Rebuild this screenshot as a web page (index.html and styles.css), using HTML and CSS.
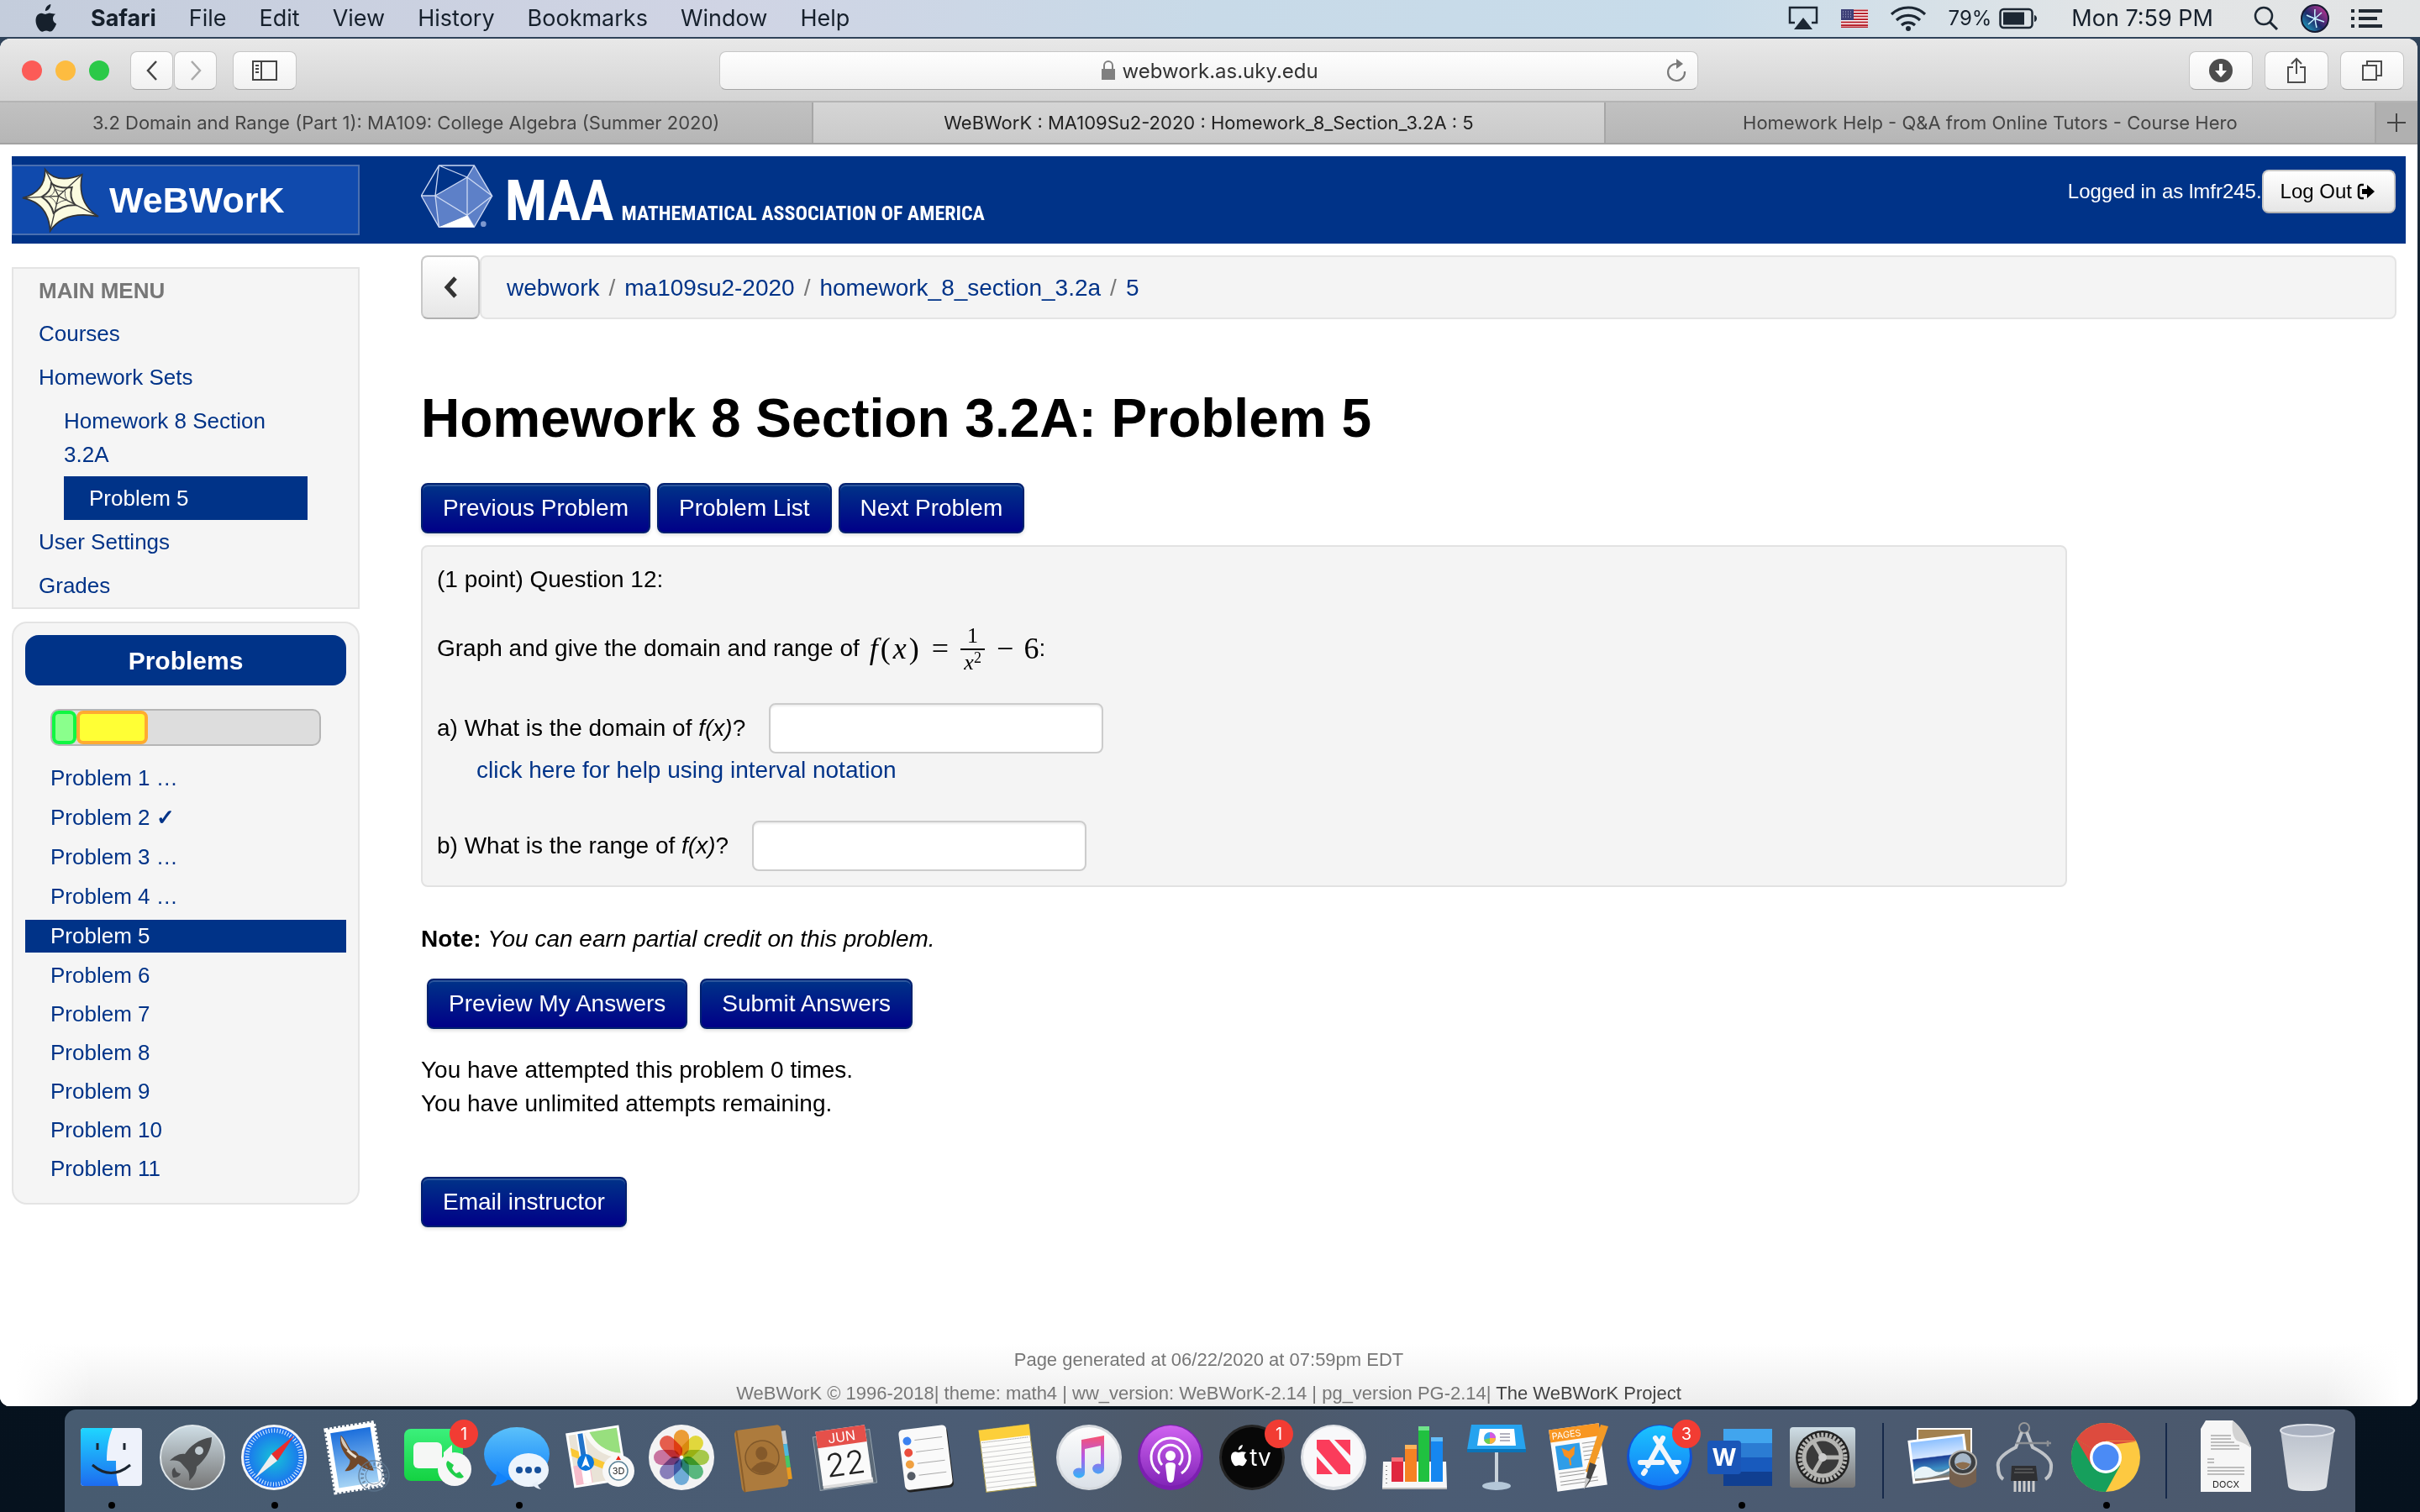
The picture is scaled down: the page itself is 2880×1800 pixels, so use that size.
FILE: index.html
```html
<!DOCTYPE html>
<html lang="en">
<head>
<meta charset="utf-8">
<title>WeBWorK : MA109Su2-2020 : Homework_8_Section_3.2A : 5</title>
<link rel="stylesheet" href="styles.css">
</head>
<body>
<header class="menubar">
  <nav class="menus">
    <svg class="apple" viewBox="0 0 26 32"><path d="M18 0c.2 2-.6 3.800-1.700 5.200C15.200 6.600 13.500 7.600 12 7.500c-.2-1.900.7-3.800 1.700-5C14.800 1.200 16.600.2 18 0zM23.500 11c-1.800 1.100-3 2.900-3 5.200 0 2.600 1.600 4.800 3.900 5.700-.6 1.900-1.500 3.700-2.700 5.500-1.100 1.600-2.300 3.300-4.200 3.300-1.800 0-2.400-1.100-4.500-1.100-2.200 0-2.800 1.100-4.500 1.200-1.800.1-3.200-1.800-4.300-3.400C1.700 23.800.1 17.500 2.300 13.400 3.400 11.300 5.500 10 7.700 10c1.800 0 3.400 1.200 4.500 1.200 1.100 0 3.100-1.400 5.300-1.200 1.700.1 3.900.6 6 1z"/></svg>
    <b>Safari</b><span>File</span><span>Edit</span><span>View</span><span>History</span><span>Bookmarks</span><span>Window</span><span>Help</span>
  </nav>
  <div class="status">
    <svg width="38" height="30" viewBox="0 0 38 30"><path d="M9 20H3V2h32v18h-6" fill="none" stroke="#1c2733" stroke-width="2.500"/><path d="M19 14l11 14H8z" fill="#1c2733"/></svg>
    <svg width="32" height="22" viewBox="0 0 32 22"><path fill="#fff" d="M0 0h32v22H0z"/><path d="M0 1.500h32M0 5h32M0 8.500h32M0 12h32M0 15.500h32M0 19h32M0 21.500h32" stroke="#b8242f" stroke-width="1.800"/><path fill="#3e4078" d="M0 0h15v13H0z"/><path d="M2 3h12M2 6h12M2 9h12" stroke="#b9bbd6" stroke-dasharray="1 2"/></svg>
    <svg width="44" height="30" viewBox="0 0 44 30"><g fill="none" stroke="#1c2733" stroke-width="3.200"><path d="M2 10a29 29 0 0 1 40 0"/><path d="M8 17a20 20 0 0 1 28 0"/><path d="M14 23a12 12 0 0 1 16 0"/></g><circle cx="22" cy="27" r="3" fill="#1c2733"/></svg>
    <span class="battery">79%<svg width="48" height="26" viewBox="0 0 48 26"><rect x="1.500" y="2" width="38" height="22" rx="4" fill="none" stroke="#1c2733" stroke-width="2.500"/><rect x="5" y="5.500" width="25" height="15" fill="#1c2733"/><path d="M42 9c4 1 4 7 0 8z" fill="#1c2733"/></svg></span>
    <span class="clock">Mon 7:59 PM</span>
    <svg width="30" height="30" viewBox="0 0 30 30"><circle cx="12" cy="12" r="10" fill="none" stroke="#1c2733" stroke-width="2.500"/><path d="M19 19l9 9" stroke="#1c2733" stroke-width="3"/></svg>
    <svg width="34" height="34" viewBox="0 0 34 34"><defs><linearGradient id="siri" x1="0" y1="1" x2="1" y2="0"><stop offset="0" stop-color="#22c8dd"/><stop offset=".45" stop-color="#1d2a6a"/><stop offset="1" stop-color="#e0379d"/></linearGradient></defs><circle cx="17" cy="17" r="16" fill="url(#siri)" stroke="#151a30" stroke-width="2"/><path d="M7 13q6 3 21 8M17 6q-1 10 2 22M25 10Q17 17 9 24" stroke="#c8f3ff" stroke-width="1.500" fill="none"/></svg>
    <svg width="38" height="24" viewBox="0 0 38 24"><path d="M9 3h28M9 12h22M9 21h28M0 3h4M0 12h4M0 21h4" stroke="#222a33" stroke-width="4"/></svg>
  </div>
</header>

<div class="window">
  <div class="toolbar">
    <div class="tools">
      <span class="light red"></span><span class="light yellow"></span><span class="light green"></span>
      <button class="tool narrow first" aria-label="Back"><svg width="16" height="28" viewBox="0 0 16 28"><path d="M13 3L3 14l10 11" fill="none" stroke="#444" stroke-width="2.500"/></svg></button>
      <button class="tool narrow" aria-label="Forward"><svg width="16" height="28" viewBox="0 0 16 28"><path d="M3 3l10 11L3 25" fill="none" stroke="#aaa" stroke-width="2.500"/></svg></button>
      <button class="tool side" aria-label="Sidebar"><svg width="32" height="26" viewBox="0 0 32 26"><path d="M2 2h28v22H2zM12 2v22M5 7h4M5 11h4M5 15h4" fill="none" stroke="#444" stroke-width="2"/></svg></button>
    </div>
    <div class="address">
      <svg width="18" height="24" viewBox="0 0 18 24"><path d="M1 10h16v13H1z" fill="#808080"/><path d="M4 11V6a5 5 0 0 1 10 0v5" fill="none" stroke="#808080" stroke-width="2"/></svg>
      <input type="text" aria-label="Address" value="webwork.as.uky.edu">
      <button class="reload" aria-label="Reload"><svg width="26" height="28" viewBox="0 0 26 28"><path d="M13 6a10 10 0 1 0 10 9" fill="none" stroke="#7a7a7a" stroke-width="2.200"/><path d="M13 0l8 6-8 6z" fill="#7a7a7a"/></svg></button>
    </div>
    <div class="tools end">
      <button class="tool" aria-label="Downloads"><svg width="28" height="28" viewBox="0 0 28 28"><circle cx="14" cy="14" r="14" fill="#4d4d4d"/><path d="M12 6h4v8h5l-7 8-7-8h5z" fill="#fff"/></svg></button>
      <button class="tool" aria-label="Share"><svg width="24" height="32" viewBox="0 0 24 32"><path d="M8 12H2v18h20V12h-6M12 20V3M6 8l6-6 6 6" fill="none" stroke="#4d4d4d" stroke-width="2"/></svg></button>
      <button class="tool" aria-label="Show tabs"><svg width="26" height="26" viewBox="0 0 26 26"><path d="M2 7h16v17H2zM7 7V2h17v17h-6" fill="none" stroke="#4d4d4d" stroke-width="2"/></svg></button>
    </div>
  </div>
  <div class="tabs">
    <div class="tab">3.2 Domain and Range (Part 1): MA109: College Algebra (Summer 2020)</div>
    <div class="tab active">WeBWorK : MA109Su2-2020 : Homework_8_Section_3.2A : 5</div>
    <div class="tab">Homework Help - Q&amp;A from Online Tutors - Course Hero</div>
    <button class="newtab" aria-label="New tab"><svg width="22" height="22" viewBox="0 0 22 22"><path d="M11 0v22M0 11h22" stroke="#444" stroke-width="2"/></svg></button>
  </div>

  <div class="page">
    <header class="masthead">
      <a class="webwork" href="#">
        <svg width="94" height="78" viewBox="52 62 282 234"><path d="M58 172Q140 150 138 70Q180 125 270 88Q250 190 328 238Q205 215 156 290Q150 190 58 172z" fill="#fbfbe0" stroke="#333" stroke-width="5"/><path d="M58 172L186 165L138 70M186 165L270 88M186 165L328 238M186 165L156 290" fill="none" stroke="#3b3b3b" stroke-width="4"/><path d="M126 168Q160 150 160 120Q190 140 234 134Q222 170 246 198Q200 196 168 226Q160 190 126 168z" fill="none" stroke="#3b3b3b" stroke-width="6"/><path d="M152 167Q172 158 172 140Q190 150 210 148Q206 168 218 180Q195 180 178 196Q174 178 152 167z" fill="none" stroke="#555" stroke-width="3"/></svg>
        <span>WeBWorK</span>
      </a>
      <a class="maa" href="#">
        <svg width="86" height="76" viewBox="33 29 258 228"><path d="M97 32h126l64 109-64 111H97L34 140z" fill="#003388"/><path d="M223 32l64 109-64 111-25-42L97 252 34 140h50L198 74z" fill="#5d80c8"/><path d="M84 140l14 110-64-110z" fill="#4a6fbd"/><path d="M97 32h126l64 109-64 111H97L34 140zM97 32L84 140H34M97 32l101 42 25-42M198 74L84 140l114 70V74l89 67-89 69 25 42M84 140l13 112" fill="none" stroke="#ccd8f2" stroke-width="4"/><path d="M97 252l101-42 25 42z" fill="#fff"/><circle cx="256" cy="241" r="10" fill="#7d98cf"/></svg>
        <span class="maa-big">MAA</span><span class="maa-small">MATHEMATICAL ASSOCIATION OF AMERICA</span>
      </a>
      <div class="login">Logged in as lmfr245.<button class="logout">Log Out <svg width="22" height="20" viewBox="0 0 22 20"><path d="M8 2H5a3 3 0 0 0-3 3v10a3 3 0 0 0 3 3h3" fill="none" stroke="#000" stroke-width="2.500"/><path d="M6 7h6V2l9 8-9 8v-5H6z"/></svg></button></div>
    </header>
    <div class="columns">
      <aside>
        <nav class="mainmenu">
          <h2>MAIN MENU</h2>
          <a href="#">Courses</a>
          <a href="#">Homework Sets</a>
          <div class="sub">
            <a href="#">Homework 8 Section 3.2A</a>
            <a href="#" class="current">Problem 5</a>
          </div>
          <a href="#">User Settings</a>
          <a href="#">Grades</a>
        </nav>
        <nav class="problems">
          <h2>Problems</h2>
          <div class="progress"><i class="done"></i><i class="partial"></i></div>
          <a href="#">Problem 1 …</a>
          <a href="#">Problem 2 <b>✓</b></a>
          <a href="#">Problem 3 …</a>
          <a href="#">Problem 4 …</a>
          <a href="#" class="current">Problem 5</a>
          <a href="#">Problem 6</a>
          <a href="#">Problem 7</a>
          <a href="#">Problem 8</a>
          <a href="#">Problem 9</a>
          <a href="#">Problem 10</a>
          <a href="#">Problem 11</a>
        </nav>
      </aside>
      <main>
        <div class="crumbs">
          <button class="up" aria-label="Up"><svg width="18" height="26" viewBox="0 0 18 26"><path d="M15 2L5 13l10 11" fill="none" stroke="#333" stroke-width="5"/></svg></button>
          <nav class="trail"><a href="#">webwork</a><i>/</i><a href="#">ma109su2-2020</a><i>/</i><a href="#">homework_8_section_3.2a</a><i>/</i><a href="#">5</a></nav>
        </div>
        <h1>Homework 8 Section 3.2A: Problem 5</h1>
        <div class="buttons">
          <button class="btn">Previous Problem</button>
          <button class="btn">Problem List</button>
          <button class="btn">Next Problem</button>
        </div>
        <form class="problem" id="answers">
          <p>(1 point) Question 12:</p>
          <div class="formula">Graph and give the domain and range of
            <span class="math"><em>f</em><span class="paren">(</span><em>x</em><span class="paren">)</span></span>
            <span class="math op">=</span>
            <span class="math frac"><span>1</span><span class="den"><em>x</em><sup>2</sup></span></span>
            <span class="math op">−</span><span class="math">6</span>:</div>
          <div class="question"><label for="domain">a) What is the domain of <em>f(x)</em>?</label><input type="text" id="domain"></div>
          <a class="help" href="#">click here for help using interval notation</a>
          <div class="question second"><label for="range">b) What is the range of <em>f(x)</em>?</label><input type="text" id="range"></div>
        </form>
        <p class="note"><b>Note:</b> <em>You can earn partial credit on this problem.</em></p>
        <div class="buttons submit">
          <button class="btn" form="answers">Preview My Answers</button>
          <button class="btn" form="answers">Submit Answers</button>
        </div>
        <p class="attempts">You have attempted this problem 0 times.<br>You have unlimited attempts remaining.</p>
        <button class="btn">Email instructor</button>
      </main>
    </div>
    <footer>
      <p>Page generated at 06/22/2020 at 07:59pm EDT</p>
      <p>WeBWorK © 1996-2018| theme: math4 | ww_version: WeBWorK-2.14 | pg_version PG-2.14| <a href="#">The WeBWorK Project</a></p>
    </footer>
  </div>
</div>

<nav class="dock">
  <svg width="0" height="0" class="defs"><defs>
    <linearGradient id="gBlue" x2="0" y2="1"><stop offset="0" stop-color="#1ac4ff"/><stop offset="1" stop-color="#1478f5"/></linearGradient>
    <linearGradient id="gFind" x2="0" y2="1"><stop offset="0" stop-color="#1fd6ff"/><stop offset="1" stop-color="#1d6cf0"/></linearGradient>
    <linearGradient id="gWhite" x2="0" y2="1"><stop offset="0" stop-color="#fdfdfd"/><stop offset="1" stop-color="#dbe1e8"/></linearGradient>
    <linearGradient id="gGrey" x2="0" y2="1"><stop offset="0" stop-color="#cfdee6"/><stop offset="1" stop-color="#757575"/></linearGradient>
    <linearGradient id="gGreen" x2="0" y2="1"><stop offset="0" stop-color="#3bf07b"/><stop offset="1" stop-color="#14d242"/></linearGradient>
    <linearGradient id="gMsg" x2="0" y2="1"><stop offset="0" stop-color="#5bc1fa"/><stop offset="1" stop-color="#1283fb"/></linearGradient>
    <linearGradient id="gPurple" x2="0" y2="1"><stop offset="0" stop-color="#cf62f0"/><stop offset="1" stop-color="#8225b8"/></linearGradient>
    <linearGradient id="gNote" x2="0" y2="1"><stop offset="0" stop-color="#f9526e"/><stop offset=".5" stop-color="#b45ae8"/><stop offset="1" stop-color="#2fb4f8"/></linearGradient>
    <linearGradient id="gSky" x2="0" y2="1"><stop offset="0" stop-color="#1c6fdc"/><stop offset="1" stop-color="#a6d4f5"/></linearGradient>
    <linearGradient id="gSea" x2="0" y2="1"><stop offset="0" stop-color="#8ec1ff"/><stop offset=".42" stop-color="#d4e6ff"/><stop offset=".45" stop-color="#1d3f96"/><stop offset=".75" stop-color="#3c8fc4"/><stop offset="1" stop-color="#8d7a68"/></linearGradient>
    <linearGradient id="gTrash" x2="0" y2="1"><stop offset="0" stop-color="#c4cad4"/><stop offset="1" stop-color="#eef0f2"/></linearGradient>
    <radialGradient id="gSaf"><stop offset="0" stop-color="#16c3d8"/><stop offset="1" stop-color="#1c6cf0"/></radialGradient>
  </defs></svg>
  <a class="app running" href="#" aria-label="Finder"><svg viewBox="0 0 96 96"><rect x="12" y="13" width="73" height="69" rx="4" fill="#eef2fb"/><path d="M16 13h34c-5 12-7 25-7 39h11c0 10 0 20 3 30H16a4 4 0 0 1-4-4V17a4 4 0 0 1 4-4z" fill="url(#gFind)"/><path d="M32 31v8M64 31v8" stroke="#1b2530" stroke-width="3"/><path d="M26 57q22 19 45 0" fill="none" stroke="#1b2530" stroke-width="3"/></svg></a>
  <a class="app" href="#" aria-label="Launchpad"><svg viewBox="0 0 96 96"><circle cx="48" cy="48" r="38" fill="url(#gGrey)" stroke="#dfe6ea" stroke-width="2"/><path d="M71 24C55 26 45 35 39 44c-6-1-12 2-18 8 6-1 11 0 13 2l8 9c2 2 3 8 2 13 7-6 9-12 9-17C62 52 71 40 71 24zM27 60c-4 2-4 7-2 12 4 0 8-1 9-5-4 0-6-2-7-7z" fill="#4a4c4e"/><circle cx="56" cy="40" r="5" fill="#c2ccd2"/></svg></a>
  <a class="app running" href="#" aria-label="Safari"><svg viewBox="0 0 96 96"><circle cx="48" cy="48" r="39" fill="#f4f4f4"/><circle cx="48" cy="48" r="36" fill="url(#gSaf)"/><circle cx="48" cy="48" r="32" fill="none" stroke="#e4f4ff" stroke-width="5" stroke-dasharray="1 2.350"/><path d="M72 22L45 44l7 8z" fill="#e92d2d"/><path d="M25 73l20-29 7 8z" fill="#eee"/></svg></a>
  <a class="app" href="#" aria-label="Mail"><svg viewBox="0 0 96 96"><g transform="rotate(-9 48 48)"><rect x="18" y="10" width="58" height="76" fill="#fff" stroke="#fff" stroke-width="4" stroke-dasharray="3 2"/><rect x="23" y="15" width="48" height="66" fill="url(#gSky)"/><path d="M35 19c3 3 6 12 9 20 4 0 7 3 8 7 8 3 14 10 15 21-6-1-13-5-17-11-4 4-10 8-17 6 4-4 8-7 8-12-6-9-11-19-6-31z" fill="#71482a"/><path d="M35 20c4 7 5 13 8 20-6-4-10-12-8-20z" fill="#d5c9b8"/><path d="M40 38q4 6 9 10" stroke="#e8e0d4" stroke-width="3" fill="none"/></g><g fill="none" stroke="#5f7890" opacity=".8"><circle cx="70" cy="70" r="18" stroke-width="1.500"/><circle cx="70" cy="70" r="10"/><circle cx="70" cy="70" r="14" stroke-width="4" stroke-dasharray="2 3"/></g></svg></a>
  <a class="app" href="#" aria-label="FaceTime"><svg viewBox="0 0 96 96"><rect x="9" y="14" width="70" height="62" rx="8" fill="url(#gGreen)"/><rect x="20" y="30" width="34" height="31" rx="6" fill="#f5f7f5"/><path d="M56 42l10-9v26l-10-6z" fill="#f5f7f5"/><circle cx="69" cy="62" r="20" fill="#f7f7f7"/><path d="M61 52c-4 3-1 10 4 15s11 8 15 4l-5-6-4 2c-2-1-4-4-5-6l2-4z" fill="#20cf4a"/></svg><span class="badge">1</span></a>
  <a class="app running" href="#" aria-label="Messages"><svg viewBox="0 0 96 96"><ellipse cx="46" cy="44" rx="39" ry="32" fill="url(#gMsg)"/><path d="M22 64q1 11-7 18 15-1 21-8z" fill="#1283fb"/><ellipse cx="60" cy="63" rx="24" ry="20" fill="#edf4fc"/><path d="M64 80q4 5 11 6-5-4-4-10z" fill="#e6eef8"/><g fill="#17509b"><circle cx="49" cy="63" r="4"/><circle cx="60" cy="63" r="4"/><circle cx="71" cy="63" r="4"/></g></svg></a>
  <a class="app" href="#" aria-label="Maps"><svg viewBox="0 0 96 96"><g transform="rotate(-9 44 48)"><rect x="12" y="14" width="64" height="66" fill="#fff"/><path d="M15 17h58v60H15z" fill="#e9e3d7"/><path d="M40 17h33v30q-24-4-33-30z" fill="#98df7e"/><path d="M15 54h20v23H15z" fill="#f7bccb"/><path d="M15 32l58 36v9L15 42z" fill="#fbc835"/><path d="M37 17q8 26 36 34" fill="none" stroke="#f9f9f5" stroke-width="6"/><path d="M29 17v60" stroke="#fff" stroke-width="10"/><path d="M29 17v32" stroke="#2273c9" stroke-width="6"/></g><circle cx="31" cy="54" r="10" fill="#0b77dd"/><path d="M31 46l5 14-5-3-5 3z" fill="#fff"/><circle cx="70" cy="64" r="19" fill="#f8f8f8"/><circle cx="70" cy="64" r="11" fill="#fff" stroke="#5d8499" stroke-width="1.500"/><path d="M70 46l3 5h-6z" fill="#e21"/><text x="70" y="68" class="t11">3D</text></svg></a>
  <a class="app" href="#" aria-label="Photos"><svg viewBox="0 0 96 96"><circle cx="48" cy="48" r="39" fill="#f3f3f3"/><g class="petals"><rect x="39" y="15" width="18" height="31" rx="9" fill="#f79a22"/><rect x="39" y="15" width="18" height="31" rx="9" fill="#eadf2a" transform="rotate(45 48 48)"/><rect x="39" y="15" width="18" height="31" rx="9" fill="#a5cd3c" transform="rotate(90 48 48)"/><rect x="39" y="15" width="18" height="31" rx="9" fill="#4bb976" transform="rotate(135 48 48)"/><rect x="39" y="15" width="18" height="31" rx="9" fill="#65acdf" transform="rotate(180 48 48)"/><rect x="39" y="15" width="18" height="31" rx="9" fill="#8378bd" transform="rotate(225 48 48)"/><rect x="39" y="15" width="18" height="31" rx="9" fill="#cd6b9f" transform="rotate(270 48 48)"/><rect x="39" y="15" width="18" height="31" rx="9" fill="#f0523e" transform="rotate(315 48 48)"/></g></svg></a>
  <a class="app" href="#" aria-label="Contacts"><svg viewBox="0 0 96 96"><g transform="rotate(-8 48 48)"><path d="M70 20h9v16h-9z" fill="#c9ccd0"/><path d="M70 36h9v14h-9z" fill="#4fb7de"/><path d="M70 50h9v14h-9z" fill="#46c766"/><path d="M70 64h9v14h-9z" fill="#e89b20"/><rect x="18" y="12" width="56" height="74" rx="5" fill="#ad7b3d"/><path d="M21 12v74" stroke="#8b5e2a" stroke-width="2"/><circle cx="47" cy="48" r="20" fill="#a67437" stroke="#80582a" stroke-width="1.500"/><ellipse cx="47" cy="43" rx="7" ry="8" fill="#84592a"/><path d="M32 60q15-14 30 0-15 15-30 0z" fill="#84592a"/></g></svg></a>
  <a class="app" href="#" aria-label="Calendar"><svg viewBox="0 0 96 96"><g transform="rotate(-8 48 48)"><path d="M14 19h68v64H14z" fill="#5c6a78" stroke="#97a5b0"/><path d="M18 76h60v6H18z" fill="#ddd"/><path d="M18 13h59v65H18z" fill="#fafafa"/><path d="M18 13h59v20H18z" fill="#e5504a"/><text x="48" y="29" class="t16 white">JUN</text><text x="48" y="69" class="t38">22</text></g></svg></a>
  <a class="app" href="#" aria-label="Reminders"><svg viewBox="0 0 96 96"><g transform="rotate(-7 48 48)"><rect x="20" y="15" width="57" height="72" rx="5" fill="#222"/><rect x="19" y="12" width="57" height="72" rx="5" fill="#fafafa"/><circle cx="28" cy="26" r="5" fill="#3c82f0"/><circle cx="28" cy="40" r="5" fill="#eb4d3d"/><circle cx="28" cy="54" r="5" fill="#f0a040"/><circle cx="28" cy="68" r="5" fill="#555c66"/><path d="M37 26h33M37 40h33M37 54h33M37 68h33" stroke="#aaa"/></g></svg></a>
  <a class="app" href="#" aria-label="Notes"><svg viewBox="0 0 96 96"><g transform="rotate(-7 48 48)"><path d="M18 12h60v74H18z" fill="#fcfcfa" stroke="#a99a4a"/><path d="M18 12h60v13H18z" fill="#fccf3a"/><path d="M20 27h56" stroke="#888" stroke-dasharray="1 1"/><path d="M18 33h60M18 39h60M18 45h60M18 51h60M18 57h60M18 63h60M18 69h60M18 75h60M18 81h60" stroke="#ccc"/></g></svg></a>
  <a class="app" href="#" aria-label="Music"><svg viewBox="0 0 96 96"><circle cx="48" cy="48" r="39" fill="#d5d9de"/><circle cx="48" cy="48" r="36" fill="url(#gWhite)"/><path d="M39 27l27-5v39a7 6 0 1 1-4-5V34l-19 4v28a7 6 0 1 1-4-5z" fill="url(#gNote)"/></svg></a>
  <a class="app" href="#" aria-label="Podcasts"><svg viewBox="0 0 96 96"><circle cx="48" cy="48" r="39" fill="#7c1fb0"/><circle cx="48" cy="46" r="36" fill="url(#gPurple)"/><g fill="none" stroke="#fff" stroke-width="3"><path d="M35 67a23 23 0 1 1 26 0"/><path d="M38 57a14 14 0 1 1 20 0"/></g><circle cx="48" cy="46" r="6" fill="#fff"/><path d="M42 58q0-4 6-4t6 4l-2 16q-1 4-4 4t-4-4z" fill="#fff"/></svg></a>
  <a class="app" href="#" aria-label="Apple TV"><svg viewBox="0 0 96 96"><circle cx="48" cy="48" r="39" fill="#242424"/><circle cx="48" cy="48" r="36" fill="#080808"/><g transform="translate(22 33) scale(.82)" fill="#fff"><path d="M18 0c.2 2-.6 3.800-1.700 5.200C15.200 6.600 13.500 7.600 12 7.500c-.2-1.900.7-3.800 1.700-5C14.800 1.200 16.600.2 18 0zM23.500 11c-1.800 1.100-3 2.900-3 5.200 0 2.600 1.600 4.800 3.900 5.700-.6 1.900-1.500 3.700-2.700 5.500-1.100 1.600-2.300 3.300-4.200 3.300-1.800 0-2.400-1.100-4.500-1.100-2.200 0-2.800 1.100-4.500 1.200-1.800.1-3.200-1.800-4.300-3.400C1.700 23.800.1 17.500 2.300 13.400 3.400 11.300 5.500 10 7.700 10c1.800 0 3.400 1.200 4.500 1.200 1.100 0 3.100-1.400 5.300-1.200 1.700.1 3.900.6 6 1z"/></g><text x="58" y="58" class="t28 white">tv</text></svg><span class="badge">1</span></a>
  <a class="app" href="#" aria-label="News"><svg viewBox="0 0 96 96"><circle cx="48" cy="48" r="39" fill="#dde0e5"/><circle cx="48" cy="47" r="36" fill="#f8f8fa"/><path d="M28 27h15l25 30v11H54L28 38z" fill="#fb3c5b"/><path d="M49 27h19v19zM28 47v21h19z" fill="#fb3c5b"/></svg></a>
  <a class="app" href="#" aria-label="Numbers"><svg viewBox="0 0 96 96"><path d="M10 53h75l1 31H9z" fill="#f7f7f7"/><path d="M9 84h77v2H9z" fill="#bbb"/><path d="M14 58v22" stroke="#888" stroke-width="2" stroke-dasharray="1 4"/><path d="M20 48h14v29H20z" fill="#e0283f"/><path d="M20 48h14v5H20z" fill="#f7707a"/><path d="M36 33h14v44H36z" fill="#f58223"/><path d="M36 33h14v5H36z" fill="#fbb45c"/><path d="M52 11h13v66H52z" fill="#20c140"/><path d="M52 11h13v5H52z" fill="#6fe48a"/><path d="M67 24h14v53H67z" fill="#1687f0"/><path d="M67 24h14v5H67z" fill="#64bdf8"/></svg></a>
  <a class="app" href="#" aria-label="Keynote"><svg viewBox="0 0 96 96"><path d="M46 40h4v42h-4z" fill="#c8d2da"/><ellipse cx="48" cy="82" rx="17" ry="5" fill="#b4c7d8"/><path d="M18 9h60l5 30H13z" fill="#26a3ef"/><path d="M13 38h70v4H13z" fill="#0b74b8"/><path d="M28 14h41l2 20H25z" fill="#fff"/><circle cx="40" cy="25" r="7" fill="#37a9f0"/><path d="M40 25v-7a7 7 0 0 1 7 7z" fill="#d55be0"/><path d="M40 25h7a7 7 0 0 1-7 7z" fill="#fcb23a"/><path d="M40 25v7a7 7 0 0 1-7-5z" fill="#6fce4c"/><path d="M52 20h12M52 24h12M52 28h12" stroke="#99a" stroke-width="1.500"/></svg></a>
  <a class="app" href="#" aria-label="Pages"><svg viewBox="0 0 96 96"><g transform="rotate(-8 48 48)"><path d="M18 11h60v74H18z" fill="#fafafa"/><path d="M18 11h60v15H18z" fill="#f89621"/><text x="38" y="23" class="t11 white">PAGES</text><path d="M23 31h29v29H23z" fill="#2f9de8"/><path d="M30 34l8 5 8-5-2 10-5 4v8h-2v-8l-5-4z" fill="#f79022"/><path d="M55 32h18M55 37h18M55 42h18M55 47h18M55 52h18M23 64h40M23 68h30M23 74h45M23 78h45" stroke="#999"/></g><path d="M75 9l9 2-20 56-7-2z" fill="#f39a26"/><path d="M62 54l8 3-8 20-6 8 1-11z" fill="#444"/><path d="M57 72l5 2-7 12z" fill="#ccc"/></svg></a>
  <a class="app" href="#" aria-label="App Store"><svg viewBox="0 0 96 96"><circle cx="48" cy="48" r="39" fill="#1051d6"/><circle cx="48" cy="46" r="36" fill="url(#gBlue)"/><g stroke="#f2f6fa" stroke-width="6" stroke-linecap="round"><path d="M52 25L34 58M43 25l25 40M25 54h26M63 54h8M31 64l-2 3"/></g></svg><span class="badge">3</span></a>
  <a class="app running" href="#" aria-label="Word"><svg viewBox="0 0 96 96"><path d="M27 14h58v17H27z" fill="#41a5ee"/><path d="M27 31h58v17H27z" fill="#2b7cd3"/><path d="M27 48h58v17H27z" fill="#185abd"/><path d="M27 65h58v17H27z" fill="#103f91"/><rect x="8" y="28" width="40" height="40" rx="4" fill="#1a56b8"/><text x="28" y="58" class="t28 white bold">W</text></svg></a>
  <a class="app" href="#" aria-label="System Preferences"><svg viewBox="0 0 96 96"><rect x="9" y="12" width="78" height="72" rx="4" fill="url(#gGrey)"/><circle cx="48" cy="48" r="32" fill="#222"/><circle cx="48" cy="48" r="27" fill="#333" stroke="#b9b9b6" stroke-width="5" stroke-dasharray="3 2"/><circle cx="48" cy="48" r="22" fill="#3a3a3a" stroke="#b5b5b2" stroke-width="5"/><path d="M48 48h22M48 48L37 29M48 48L37 67" stroke="#b5b5b2" stroke-width="5"/><circle cx="48" cy="48" r="5" fill="#ccc"/></svg></a>
  <hr>
  <a class="app" href="#" aria-label="Preview"><svg viewBox="0 0 96 96"><path d="M17 13h66v54H17z" fill="#fff"/><path d="M19 15h62v50H19z" fill="#a3814f"/><g transform="rotate(-7 40 48)"><path d="M9 24h68v52H9z" fill="#fff"/><path d="M12 27h62v46H12z" fill="url(#gSea)"/><path d="M12 62q12-10 22 0t30-6v5q-20 12-52 9z" fill="#e8f3f8"/></g><path d="M56 55v22q14 14 32 0V55z" fill="#75604e"/><ellipse cx="72" cy="54" rx="16" ry="14" fill="#3c3f42" stroke="#b5b3ae" stroke-width="2"/><circle cx="72" cy="53" r="10" fill="#a6b7c8"/><path d="M63 56q9-5 18 0-9 12-18 0z" fill="#8d6e4e"/></svg></a>
  <a class="app" href="#" aria-label="System Information"><svg viewBox="0 0 96 96"><circle cx="48" cy="13" r="6" fill="none" stroke="#999" stroke-width="2"/><path d="M45 18L38 36Q14 48 17 60q0 10 6 14M51 18l7 18q24 12 22 24 0 10-7 14" fill="none" stroke="#bfc3c8" stroke-width="4"/><path d="M38 31h42M76 28v7" stroke="#8b8f94" stroke-width="2.500"/><path d="M33 58h29l2 18H32z" fill="#2f3033"/><path d="M37 62h21M36 66h24" stroke="#777"/><path d="M37 76v13M42.500 76v13M48 76v13M53.500 76v13M59 76v13" stroke="#ccc" stroke-width="3"/></svg></a>
  <a class="app running" href="#" aria-label="Chrome"><svg viewBox="0 0 96 96"><circle cx="48" cy="48" r="41" fill="#fdc941"/><path d="M48 48L13 26.500A41 41 0 0 0 48 89l17-31z" fill="#169f5c"/><path d="M48 48L13 26.500A41 41 0 0 1 84 28.500H48z" fill="#dd4b3e"/><path d="M13 26.500L31 57l17-9zM48 29h36L48 34z" fill="#dd4b3e"/><circle cx="48" cy="48" r="19" fill="#fff"/><circle cx="48" cy="48" r="15.500" fill="#4b8bf5"/></svg></a>
  <hr>
  <a class="app" href="#" aria-label="Documents"><svg viewBox="0 0 96 96"><path d="M24 4h32q12 10 22 32v53H18V14z" fill="#f6f6f6"/><path d="M56 4q-2 18 5 24 10 3 17 9Q70 14 56 4z" fill="#d2d2d2"/><path d="M30 22h24M30 26h24M30 30h28M30 34h34M30 38h34M26 50h8M26 54h8M26 60h44M26 64h44M26 68h44" stroke="#aaa" stroke-width="1.500"/><text x="48" y="84" class="t11">DOCX</text></svg></a>
  <a class="app" href="#" aria-label="Trash"><svg viewBox="0 0 96 96"><path d="M16 16l9 66q1 6 23 6t23-6l9-66z" fill="url(#gTrash)" opacity=".92"/><ellipse cx="48" cy="16" rx="32" ry="7" fill="#a9b1c0" stroke="#dfe3ea" stroke-width="2"/></svg></a>
</nav>
</body>
</html>
```
FILE: styles.css
```css
* { box-sizing: border-box; }

body {
  margin: 0;
  min-height: 100vh;
  display: flex;
  flex-direction: column;
  align-items: center;
  background: linear-gradient(#3b5069, #2c3f55 60px, #081521 400px, #06121e);
  font: 28px/40px "Liberation Sans", Arial, sans-serif;
  color: #000;
}

h1, h2, p { margin: 0; }
a { color: #003388; text-decoration: none; }
button { font: inherit; padding: 0; cursor: pointer; }
svg { display: block; flex: none; }

/* menu bar */
.menubar {
  align-self: stretch;
  height: 44px;
  display: flex;
  align-items: center;
  justify-content: space-between;
  padding: 0 44px 0 41px;
  background: linear-gradient(90deg, #c4cddc, #d0d4e4 30%, #c8dae8 50%, #c8dcea 70%, #e3e5e6 88%, #e2e4e5);
  font: 27px/46px Inter, sans-serif;
  color: #16202c;
}
.menus, .status, .battery { display: flex; align-items: center; }
.menus { gap: 39px; }
.apple { width: 28px; height: 34px; fill: #16202c; }
.status { gap: 26px; }
.battery { gap: 9px; font-size: 24px; }
.clock { padding: 0 22px 0 12px; }

/* browser window */
.window {
  align-self: stretch;
  flex: 1;
  display: flex;
  flex-direction: column;
  margin: 2px 3px 4px 0;
  border-radius: 12px;
  overflow: hidden;
  background: #fff;
}
.toolbar {
  display: grid;
  grid-template-columns: 1fr 1165px 1fr;
  align-items: center;
  height: 76px;
  padding-top: 2px;
  background: linear-gradient(#e8e8e8, #d4d4d4);
  border-bottom: 2px solid #b4b4b4;
}
.tools { display: flex; align-items: center; padding-left: 26px; }
.tools.end { justify-content: flex-end; gap: 14px; padding: 0 16px 0 0; }
.light { width: 24px; height: 24px; border-radius: 50%; margin-right: 16px; }
.red { background: #fc5b57; }
.yellow { background: #fdbc40; }
.green { background: #2bc948; }
.tool, .address {
  display: flex;
  align-items: center;
  justify-content: center;
  width: 76px;
  height: 46px;
  border: 1px solid #c6c6c6;
  border-bottom-color: #a5a5a5;
  border-radius: 8px;
  background: linear-gradient(#fefefe, #f1f1f1);
}
.narrow { width: 51px; margin-right: 1px; }
.first { margin-left: 9px; }
.side { margin-left: 18px; }
.address { width: auto; gap: 8px; position: relative; }
.address input {
  width: 232px;
  padding: 2px 0 0;
  border: 0;
  background: none;
  font: 24px/30px Inter, sans-serif;
  color: #333;
}
.reload { position: absolute; right: 12px; border: 0; background: none; }
.tabs {
  display: grid;
  grid-template-columns: 968fr 942fr 917fr 49px;
  height: 50px;
  background: linear-gradient(#c1c1c1, #b6b6b6);
  border-bottom: 2px solid #a2a2a2;
  font: 22px/48px Inter, sans-serif;
  color: #444;
  text-align: center;
}
.tab { border-right: 2px solid #a6a6a6; }
.active { background: linear-gradient(#d5d5d5, #cacaca); color: #222; }
.newtab { border: 0; background: #b0b0b0; display: grid; place-items: center; }

/* page */
.page {
  flex: 1;
  display: flex;
  flex-direction: column;
  padding: 14px 14px 0;
  background:
    linear-gradient(90deg, #fff 20px, #fff0 110px calc(100% - 110px), #fff calc(100% - 20px)) bottom / 100% 74px no-repeat,
    linear-gradient(#fff, #ededed) bottom / 100% 74px no-repeat,
    #fff;
}
.masthead {
  display: flex;
  align-items: flex-start;
  height: 104px;
  padding: 10px 0;
  background: #003388;
  color: #fff;
}
.webwork {
  display: flex;
  align-items: center;
  gap: 11px;
  width: 414px;
  height: 84px;
  padding-left: 10px;
  border: 2px solid #4a6fb0;
  border-left-width: 1px;
  background: #104aad;
  color: #fff;
  font-size: 43px;
  font-weight: bold;
}
.maa {
  display: flex;
  align-items: baseline;
  margin-left: 73px;
  color: #fff;
  font-family: "Roboto Condensed", "Liberation Sans Narrow", "Liberation Sans", sans-serif;
  font-weight: bold;
}
.maa svg { align-self: flex-start; }
.maa-big { margin-left: 14px; font-size: 66px; line-height: 88px; }
.maa-small { margin-left: 9px; font-size: 24px; }
.login { display: flex; align-items: center; margin-left: auto; padding: 6px 12px 0 0; font-size: 24px; }
.logout {
  display: flex;
  align-items: center;
  gap: 6px;
  height: 52px;
  padding: 0 22px 0 20px;
  border: 2px solid #c8c8c8;
  border-bottom-color: #b0b0b0;
  border-radius: 8px;
  background: linear-gradient(#fff, #e6e6e6);
  color: #000;
}
.columns { display: grid; grid-template-columns: 414px 1fr; column-gap: 73px; padding-right: 11px; }

/* sidebar */
aside { padding-top: 28px; font-size: 26px; }
.mainmenu, .problems {
  display: flex;
  flex-direction: column;
  border: 2px solid #e4e4e4;
  background: #f5f5f5;
}
.mainmenu { margin-bottom: 15px; }
.mainmenu h2 { padding: 6px 30px 5px; font-size: 26px; line-height: 40px; color: #777; }
.mainmenu a { padding: 6px 30px; }
.sub { margin: 0 60px; display: flex; flex-direction: column; }
.sub a { padding: 6px 30px 6px 0; }
.mainmenu .sub a { padding-left: 0; }
.mainmenu .sub .current { padding-left: 30px; }
.current { background: #003388; color: #fff; }
.problems { padding: 14px 14px 14px; border-radius: 18px; }
.problems h2 {
  height: 60px;
  border-radius: 16px;
  background: #003388;
  color: #fff;
  font-size: 30px;
  line-height: 62px;
  text-align: center;
}
.progress {
  display: flex;
  margin: 28px 30px 19px;
  height: 44px;
  border: 2px solid #b5b5b5;
  border-radius: 10px;
  background: #ddd;
}
.progress i { border: 4px solid #10f742; border-radius: 8px; background: #8aff8c; }
.progress .done { width: 9%; }
.progress .partial { width: 27%; border-color: #ffab30; background: #ffff35; }
.problems a { padding-left: 30px; line-height: 39px; margin-bottom: 8px; }
.problems a:nth-of-type(n + 6) { margin-bottom: 7px; }
.problems b { font-size: 26px; }

/* main column */
main { padding-top: 14px; }
.crumbs { display: flex; height: 76px; }
.up {
  display: grid;
  place-items: center;
  width: 70px;
  border: 2px solid #c8c8c8;
  border-bottom-color: #b0b0b0;
  border-radius: 8px;
  background: linear-gradient(#fff, #e6e6e6);
}
.trail {
  flex: 1;
  padding-left: 30px;
  border: 2px solid #e4e4e4;
  border-radius: 8px;
  background: #f4f4f4;
  line-height: 74px;
}
.trail i { font-style: normal; color: #777; margin: 0 11px; }
h1 { margin: 78px 0 37px; font-size: 64px; line-height: 80px; }
.buttons { display: flex; gap: 8px; }
.btn {
  height: 60px;
  padding: 0 24px;
  border: 2px solid #00206f;
  border-radius: 8px;
  background: linear-gradient(#003388, #000088);
  box-shadow: inset 0 2px 0 #2c559c, 0 2px 4px #0002;
  color: #fff;
}
.problem {
  width: calc(100% * 5 / 6);
  margin: 14px 0 42px;
  padding: 19px 17px 17px;
  border: 2px solid #e2e2e2;
  border-radius: 8px;
  background: #f4f4f4;
}
.formula { display: flex; align-items: center; height: 64px; margin: 30px 0 33px; }
.math { font-family: "Liberation Serif", "Times New Roman", serif; font-size: 36px; margin-left: 12px; }
.paren { margin: 0 3px; }
.frac {
  display: grid;
  justify-items: stretch;
  text-align: center;
  grid-template-rows: 29px 29px;
  width: 29px;
  margin: 0 2px 0 14px;
  font-size: 26px;
  line-height: 28px;
}
.den { border-top: 2px solid #000; }
.den sup { font-size: 18px; line-height: 18px; vertical-align: 8px; }
.question { display: flex; align-items: center; gap: 28px; }
.question.second { margin-top: 40px; }
.question input {
  width: 398px;
  height: 60px;
  padding: 0 12px;
  border: 2px solid #ccc;
  border-radius: 8px;
  background: #fff;
  box-shadow: inset 0 2px 2px #0001;
  font: inherit;
}
.help { display: block; margin-left: 47px; }
.submit { gap: 15px; margin: 27px 0 29px 7px; }
.attempts { margin-bottom: 67px; }
footer {
  display: grid;
  gap: 10px;
  margin-top: auto;
  font-size: 22px;
  line-height: 30px;
  color: #777;
  text-align: center;
}
footer a { color: #444; }

/* dock */
.dock {
  display: flex;
  height: 122px;
  padding: 9px 8px 0 7px;
  border-radius: 14px 14px 0 0;
  background: linear-gradient(90deg, #475b70, #4b5c74 40%, #4e5968 50%, #4b5c74 60%, #4b586c);
}
.defs { position: absolute; }
.app { position: relative; width: 97px; }
.app svg { width: 96px; height: 96px; }
.running::after {
  content: "";
  display: block;
  width: 8px;
  height: 8px;
  margin: 5px auto 0;
  border-radius: 50%;
  background: #000;
}
.badge {
  position: absolute;
  top: 3px;
  right: 0;
  width: 34px;
  height: 34px;
  border-radius: 50%;
  background: #f23c33;
  color: #fff;
  font: 20px/34px Inter, sans-serif;
  text-align: center;
}
.dock hr { width: 2px; height: 90px; margin: 7px 22px 0; border: 0; background: #16294a; }
.petals rect { mix-blend-mode: multiply; opacity: .9; }
.dock text { font-family: Inter, sans-serif; text-anchor: middle; fill: #222; }
.t11 { font-size: 11px; }
.t16 { font-size: 16px; }
.t28 { font-size: 28px; }
.t38 { font-size: 38px; font-weight: 300; }
.dock .white { fill: #fff; }
.bold { font-weight: bold; }
```
